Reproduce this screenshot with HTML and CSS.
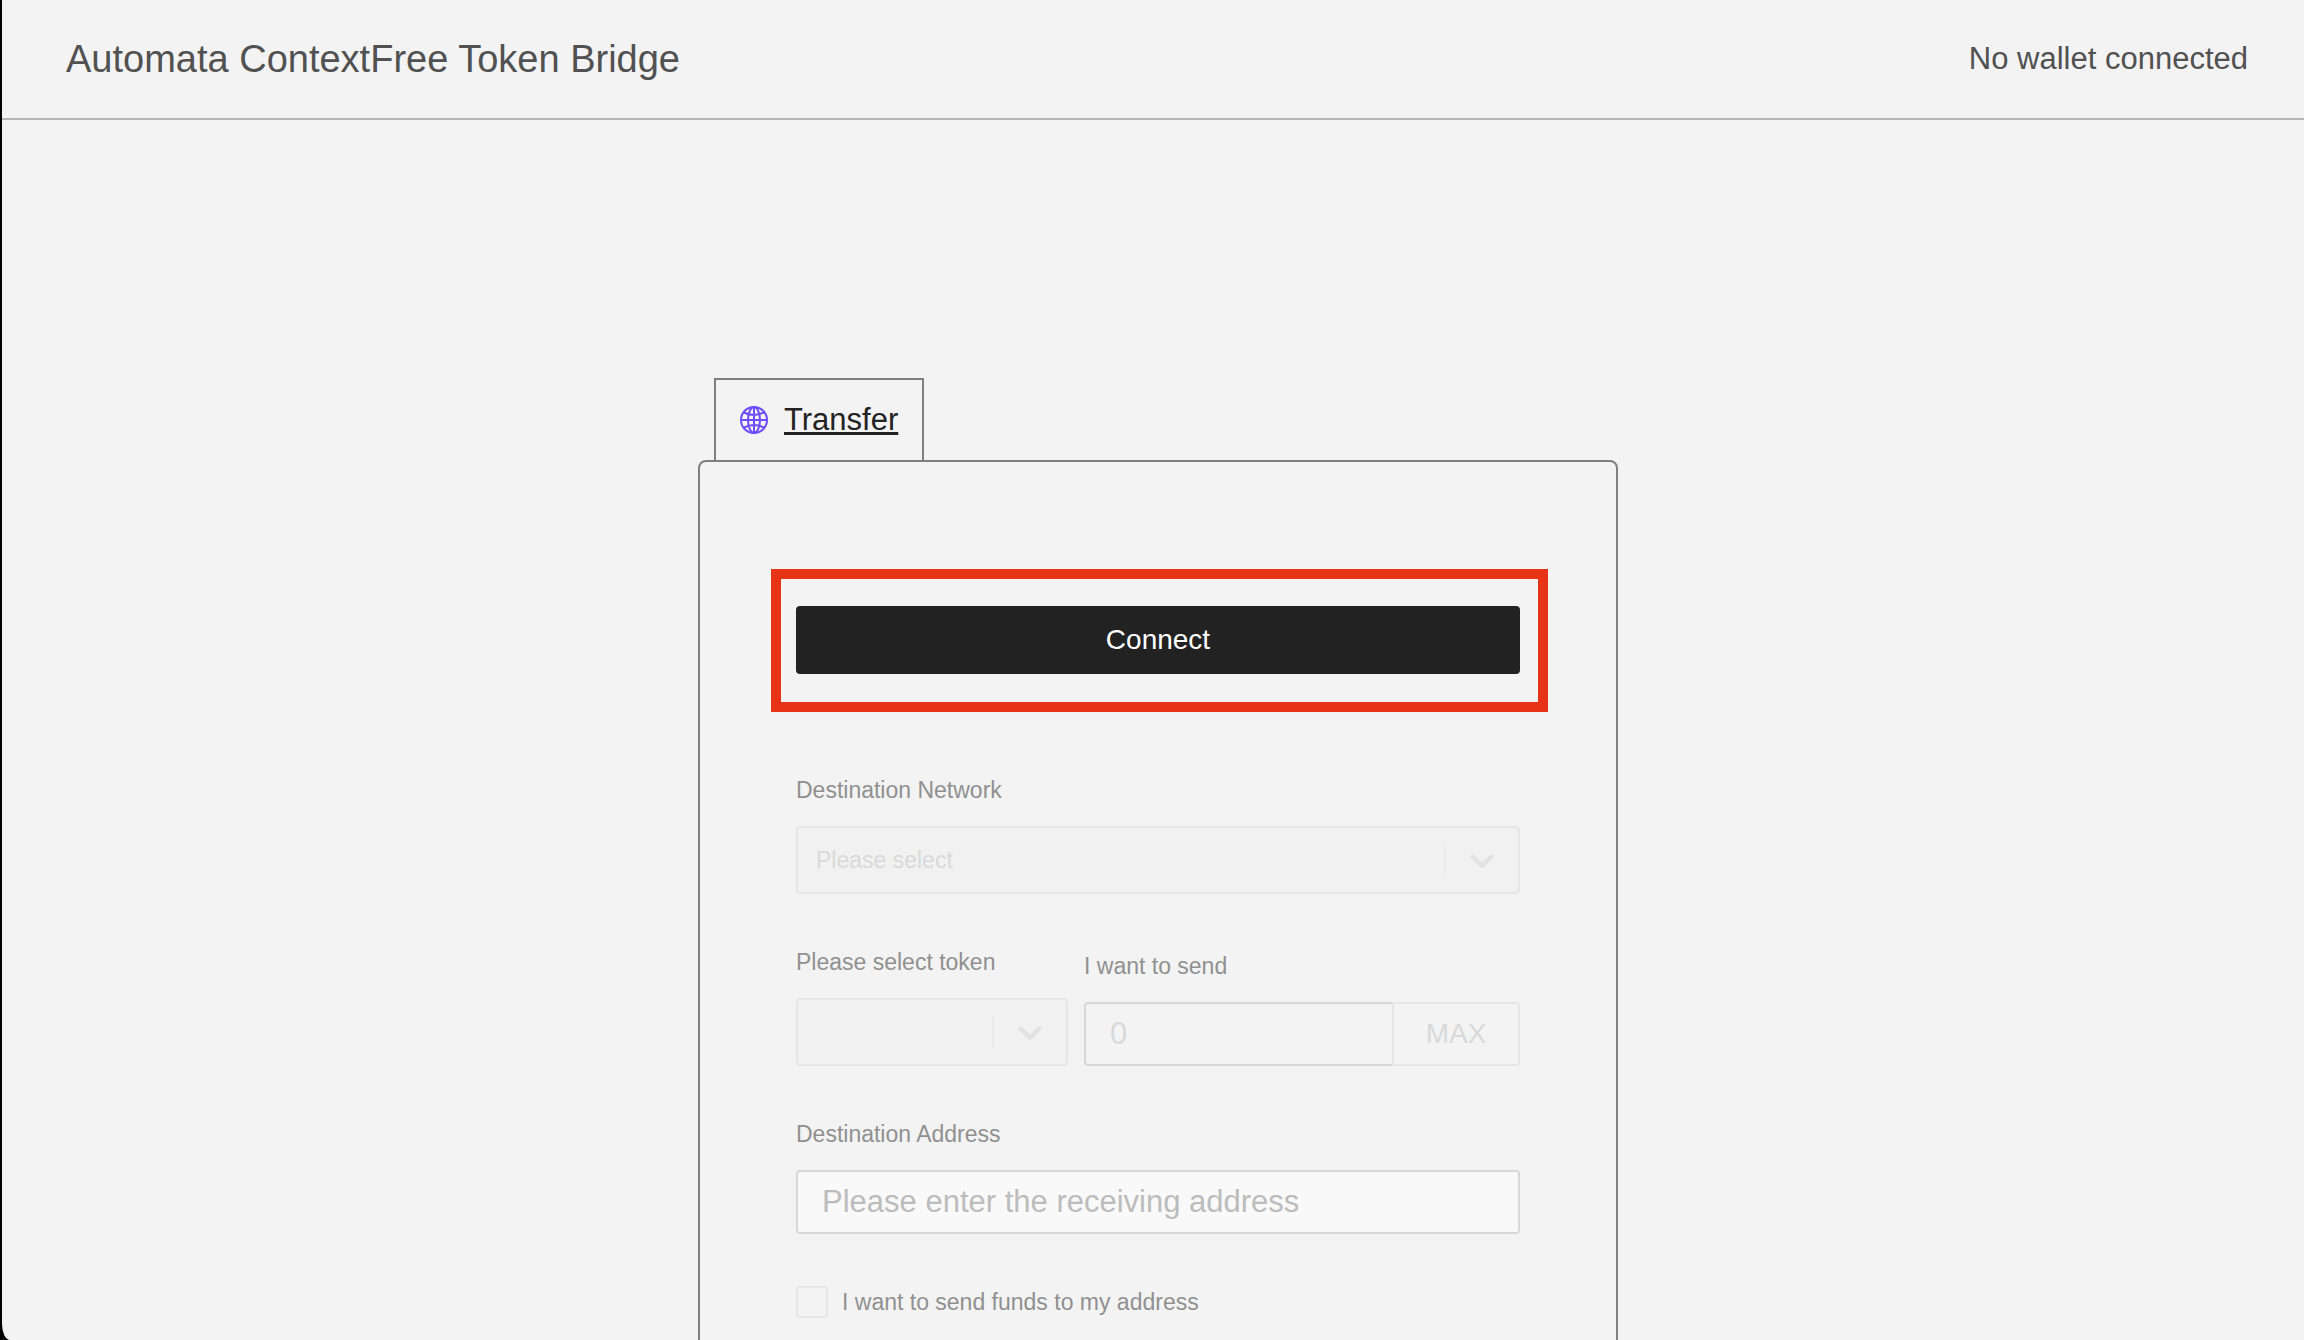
FILE: index.html
```html
<!DOCTYPE html>
<html lang="en">
<head>
<meta charset="utf-8">
<meta name="viewport" content="width=device-width, initial-scale=1">
<title>Automata ContextFree Token Bridge</title>
<link rel="stylesheet" href="styles.css">
</head>
<body>
<div class="window">
  <header class="topbar">
    <h1 class="topbar-title">Automata ContextFree Token Bridge</h1>
    <p class="topbar-status">No wallet connected</p>
  </header>
  <main class="bridge">
    <nav class="tabs">
      <a class="tab" href="#transfer">
        <svg class="tab-icon" viewBox="0 0 28 28" aria-hidden="true">
          <circle cx="14" cy="14" r="13"/>
          <ellipse cx="14" cy="14" rx="6" ry="13"/>
          <path d="M14 1v26M1 14h26M4 6.500Q14 11.500 24 6.500M4 21.500Q14 16.500 24 21.500"/>
        </svg>
        <span class="tab-label">Transfer</span>
      </a>
    </nav>
    <form class="card" id="transfer">
      <div class="connect">
        <button class="connect-button" type="button">Connect</button>
      </div>
      <div class="field">
        <label class="label" for="network">Destination Network</label>
        <div class="select-box">
          <select class="select" id="network" disabled><option>Please select</option></select>
          <svg class="chevron" viewBox="0 0 20 20" aria-hidden="true"><path d="M4.516 7.548c0.436-0.446 1.043-0.481 1.576 0l3.908 3.747 3.908-3.747c0.533-0.481 1.141-0.446 1.574 0 0.436 0.445 0.408 1.197 0 1.615-0.406 0.418-4.695 4.502-4.695 4.502-0.217 0.223-0.502 0.335-0.787 0.335s-0.570-0.112-0.789-0.335c0 0-4.287-4.084-4.695-4.502s-0.436-1.170 0-1.615z"/></svg>
        </div>
      </div>
      <div class="field-row">
        <div class="field">
          <label class="label" for="token">Please select token</label>
          <div class="select-box">
            <select class="select" id="token" disabled><option></option></select>
            <svg class="chevron" viewBox="0 0 20 20" aria-hidden="true"><path d="M4.516 7.548c0.436-0.446 1.043-0.481 1.576 0l3.908 3.747 3.908-3.747c0.533-0.481 1.141-0.446 1.574 0 0.436 0.445 0.408 1.197 0 1.615-0.406 0.418-4.695 4.502-4.695 4.502-0.217 0.223-0.502 0.335-0.787 0.335s-0.570-0.112-0.789-0.335c0 0-4.287-4.084-4.695-4.502s-0.436-1.170 0-1.615z"/></svg>
          </div>
        </div>
        <div class="field">
          <label class="label" for="amount">I want to send</label>
          <div class="amount">
            <input class="input amount-input" id="amount" type="text" placeholder="0" disabled>
            <button class="max-button" type="button" disabled>MAX</button>
          </div>
        </div>
      </div>
      <div class="destination">
        <div class="field">
          <label class="label" for="address">Destination Address</label>
          <input class="input address-input" id="address" type="text" placeholder="Please enter the receiving address">
        </div>
        <div class="check-row">
          <input class="checkbox" id="own-address" type="checkbox" disabled>
          <label class="label" for="own-address">I want to send funds to my address</label>
        </div>
      </div>
    </form>
  </main>
</div>
</body>
</html>
```
FILE: styles.css
```css
* {
  box-sizing: border-box;
}

html {
  background: #000;
}

body {
  margin: 0;
  font-family: "Liberation Sans", Arial, sans-serif;
  font-size: 23px;
  line-height: 28px;
  color: #515151;
}

button,
input,
select {
  margin: 0;
  font-family: inherit;
}

.window {
  height: 100vh;
  margin-left: 2px;
  overflow: hidden;
  background: #f3f3f3;
  border-bottom-left-radius: 8px 16px;
}

.topbar {
  display: flex;
  align-items: center;
  justify-content: space-between;
  height: 120px;
  padding: 0 56px 0 64px;
  border-bottom: 2px solid #b5b5b5;
}

.topbar-title {
  margin: 0;
  font-size: 38px;
  line-height: 48px;
  font-weight: 400;
}

.topbar-status {
  margin: 0;
  font-size: 31px;
  line-height: 36px;
}

/* The page gutter is 10px wider on the left than on the right. */
.bridge {
  padding: 258px 0 0 10px;
}

.tabs,
.card {
  width: 100%;
  max-width: 920px;
  margin: 0 auto;
}

.tabs {
  display: flex;
  padding: 0 16px;
}

.tab {
  display: flex;
  align-items: center;
  gap: 16px;
  height: 82px;
  padding: 0 24px;
  border: 2px solid #808080;
  border-bottom: 0;
  color: #222;
  font-size: 31px;
  line-height: 36px;
}

.tab-icon {
  width: 28px;
  height: 28px;
  fill: none;
  stroke: #6b4dfc;
  stroke-width: 2;
}

.card {
  display: flex;
  flex-direction: column;
  gap: 54px;
  padding: 144px 96px 96px;
  border: 2px solid #808080;
  border-radius: 8px;
}

.connect {
  position: relative;
  display: grid;
  margin-bottom: 48px;
}

.connect::after {
  content: "";
  position: absolute;
  inset: -37px -28px -38px -25px;
  border: 10px solid #e73316;
  pointer-events: none;
}

.connect-button {
  height: 68px;
  border: 0;
  border-radius: 4px;
  background: #222;
  color: #fff;
  font-size: 28px;
}

.field {
  display: flex;
  flex-direction: column;
  gap: 22px;
}

.field-row {
  display: grid;
  grid-template-columns: 272fr 436fr;
  align-items: end;
  gap: 16px;
}

.label {
  color: #909090;
}

.select-box {
  position: relative;
  display: grid;
}

.select {
  appearance: none;
  height: 68px;
  padding: 0 74px 0 18px;
  border: 2px solid #e6e6e6;
  border-radius: 4px;
  background: #f1f1f1;
  color: #d9d9d9;
  font-size: 23px;
  opacity: 1;
}

.select-box::after {
  content: "";
  position: absolute;
  top: 18px;
  right: 74px;
  width: 2px;
  height: 32px;
  background: #ebebeb;
}

.chevron {
  position: absolute;
  top: 14px;
  right: 18px;
  width: 40px;
  height: 40px;
  fill: #e2e2e2;
  pointer-events: none;
}

.input {
  width: 100%;
  min-width: 0;
  height: 64px;
  padding: 0 24px;
  border: 2px solid #d8d8d8;
  border-radius: 4px;
  background: #f3f3f3;
  font-size: 31px;
}

.input::placeholder {
  color: #bcbcbc;
  opacity: 1;
}

.amount {
  display: flex;
}

.amount-input {
  flex: 1;
  border-right: 0;
  border-radius: 4px 0 0 4px;
}

.amount-input::placeholder {
  color: #d9d9d9;
}

.max-button {
  width: 128px;
  height: 64px;
  border: 2px solid #e6e6e6;
  border-radius: 0 4px 4px 0;
  background: #f3f3f3;
  color: #d9d9d9;
  font-size: 28px;
}

.address-input {
  background: #f9f9f9;
}

.destination {
  display: flex;
  flex-direction: column;
  gap: 52px;
}

.check-row {
  display: flex;
  align-items: center;
  gap: 14px;
}

.checkbox {
  appearance: none;
  width: 32px;
  height: 32px;
  border: 2px solid #e6e6e6;
  border-radius: 4px;
}
```
